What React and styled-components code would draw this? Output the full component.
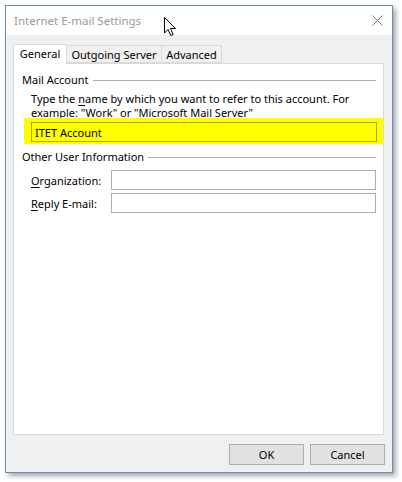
import React from 'react';
import styled, { createGlobalStyle } from 'styled-components';

const GlobalStyle = createGlobalStyle`
  html, body {
    margin: 0;
    padding: 0;
    background: #ffffff;
  }
  body {
    font-family: "Segoe UI", "Noto Sans", sans-serif;
    font-size: 11px;
    color: #000;
  }
`;

const Page = styled.div`
  padding: 5px;
  width: 402px;
  height: 482px;
  box-sizing: border-box;
`;

const Window = styled.div`
  position: relative;
  width: 388px;
  height: 468px;
  box-sizing: border-box;
  border: 1px solid #6b8cae;
  box-shadow: 3px 3px 5px rgba(0, 0, 0, 0.35);
  display: flex;
  flex-direction: column;
  background: #f0f0f0;
`;

const TitleBar = styled.div`
  height: 29px;
  background: #ffffff;
  display: flex;
  align-items: center;
  justify-content: space-between;
  padding: 0 9px 0 8px;
`;

const Title = styled.span`
  color: #9a9a9a;
  font-size: 11.5px;
`;

const Body = styled.div`
  flex: 1;
  display: flex;
  flex-direction: column;
  padding: 8px 8px 7px 7px;
`;

const TabRow = styled.div`
  display: flex;
  align-items: flex-end;
  height: 20px;
`;

const Tab = styled.div`
  position: relative;
  z-index: ${({ active }) => (active ? 1 : 0)};
  box-sizing: border-box;
  height: ${({ active }) => (active ? '20px' : '18px')};
  margin-bottom: ${({ active }) => (active ? '-1px' : '0')};
  padding-bottom: ${({ active }) => (active ? '2px' : '0')};
  width: ${({ w }) => w}px;
  border: 1px solid #d9d9d9;
  border-left: ${({ first }) => (first ? '1px solid #d9d9d9' : 'none')};
  border-bottom: ${({ active }) => (active ? 'none' : '1px solid #d9d9d9')};
  background: ${({ active }) => (active ? '#ffffff' : '#f0f0f0')};
  display: flex;
  align-items: center;
  justify-content: center;
  white-space: nowrap;
`;

const Panel = styled.div`
  flex: 1;
  background: #ffffff;
  border: 1px solid #d9d9d9;
  padding: 8px 7px 0 8px;
  display: flex;
  flex-direction: column;
`;

const SectionHeader = styled.div`
  display: flex;
  align-items: center;
  gap: 4px;
  line-height: 16px;
  margin-top: ${({ top }) => top || 0}px;
`;

const SectionLine = styled.div`
  flex: 1;
  border-top: 1px solid #adadad;
  margin-top: 1px;
`;

const Description = styled.div`
  margin: 4px 0 0 9px;
  line-height: 14px;
  white-space: nowrap;
`;

const Highlight = styled.div`
  margin: -2px -7px 0 2px;
  height: 26px;
  box-sizing: border-box;
  padding: 4px 6px 2px 7px;
  background: #ffff00;
`;

const TextBox = styled.div`
  box-sizing: border-box;
  height: 20px;
  flex: ${({ grow }) => (grow ? 1 : 'none')};
  border: 1px solid ${({ tint }) => tint || '#acacac'};
  background: ${({ fill }) => fill || '#ffffff'};
  display: flex;
  align-items: center;
  padding-left: 3px;
`;

const FieldList = styled.div`
  display: flex;
  flex-direction: column;
  gap: 3px;
  margin: 5px 0 0 9px;
`;

const FieldRow = styled.div`
  display: flex;
  align-items: center;
`;

const FieldLabel = styled.label`
  width: 80px;
  flex: none;
`;

const Key = styled.span`
  text-decoration: underline;
  text-underline-offset: 2px;
`;

const Footer = styled.div`
  display: flex;
  justify-content: flex-end;
  gap: 6px;
  padding-top: 9px;
  margin-right: -1px;
`;

const Button = styled.button`
  width: 75px;
  height: 21px;
  box-sizing: border-box;
  border: 1px solid #adadad;
  background: #e1e1e1;
  font-family: "Segoe UI", "Noto Sans", sans-serif;
  font-size: 11px;
  color: #000;
  padding: 0;
`;

const Cursor = styled.svg`
  position: absolute;
  left: 158px;
  top: 11px;
`;

const CloseIcon = () => (
  <svg width="11" height="11" viewBox="0 0 11 11">
    <path d="M0.5 0.5 L10.5 10.5 M10.5 0.5 L0.5 10.5" stroke="#7a7a7a" strokeWidth="1" fill="none" />
  </svg>
);

export default function App() {
  return (
    <>
      <GlobalStyle />
      <Page>
        <Window>
          <TitleBar>
            <Title>Internet E-mail Settings</Title>
            <CloseIcon />
          </TitleBar>
          <Body>
            <TabRow>
              <Tab active first w={54}>General</Tab>
              <Tab w={95}>Outgoing Server</Tab>
              <Tab w={60}>Advanced</Tab>
            </TabRow>
            <Panel>
              <SectionHeader>
                <span>Mail Account</span>
                <SectionLine />
              </SectionHeader>
              <Description>
                Type the <Key>n</Key>ame by which you want to refer to this account. For
                <br />
                example: "Work" or "Microsoft Mail Server"
              </Description>
              <Highlight>
                <TextBox tint="#a8a800" fill="#ffff00">ITET Account</TextBox>
              </Highlight>
              <SectionHeader top={5}>
                <span>Other User Information</span>
                <SectionLine />
              </SectionHeader>
              <FieldList>
                <FieldRow>
                  <FieldLabel><Key>O</Key>rganization:</FieldLabel>
                  <TextBox grow />
                </FieldRow>
                <FieldRow>
                  <FieldLabel><Key>R</Key>eply E-mail:</FieldLabel>
                  <TextBox grow />
                </FieldRow>
              </FieldList>
            </Panel>
            <Footer>
              <Button>OK</Button>
              <Button>Cancel</Button>
            </Footer>
          </Body>
          <Cursor width="13" height="20" viewBox="0 0 13 20">
            <path
              d="M0.5 0.5 L0.5 16 L4 12.5 L6.8 18.5 L9.2 17.5 L6.5 11.5 L11.5 11.5 Z"
              fill="#ffffff"
              stroke="#000000"
              strokeWidth="1"
              strokeLinejoin="miter"
            />
          </Cursor>
        </Window>
      </Page>
    </>
  );
}
